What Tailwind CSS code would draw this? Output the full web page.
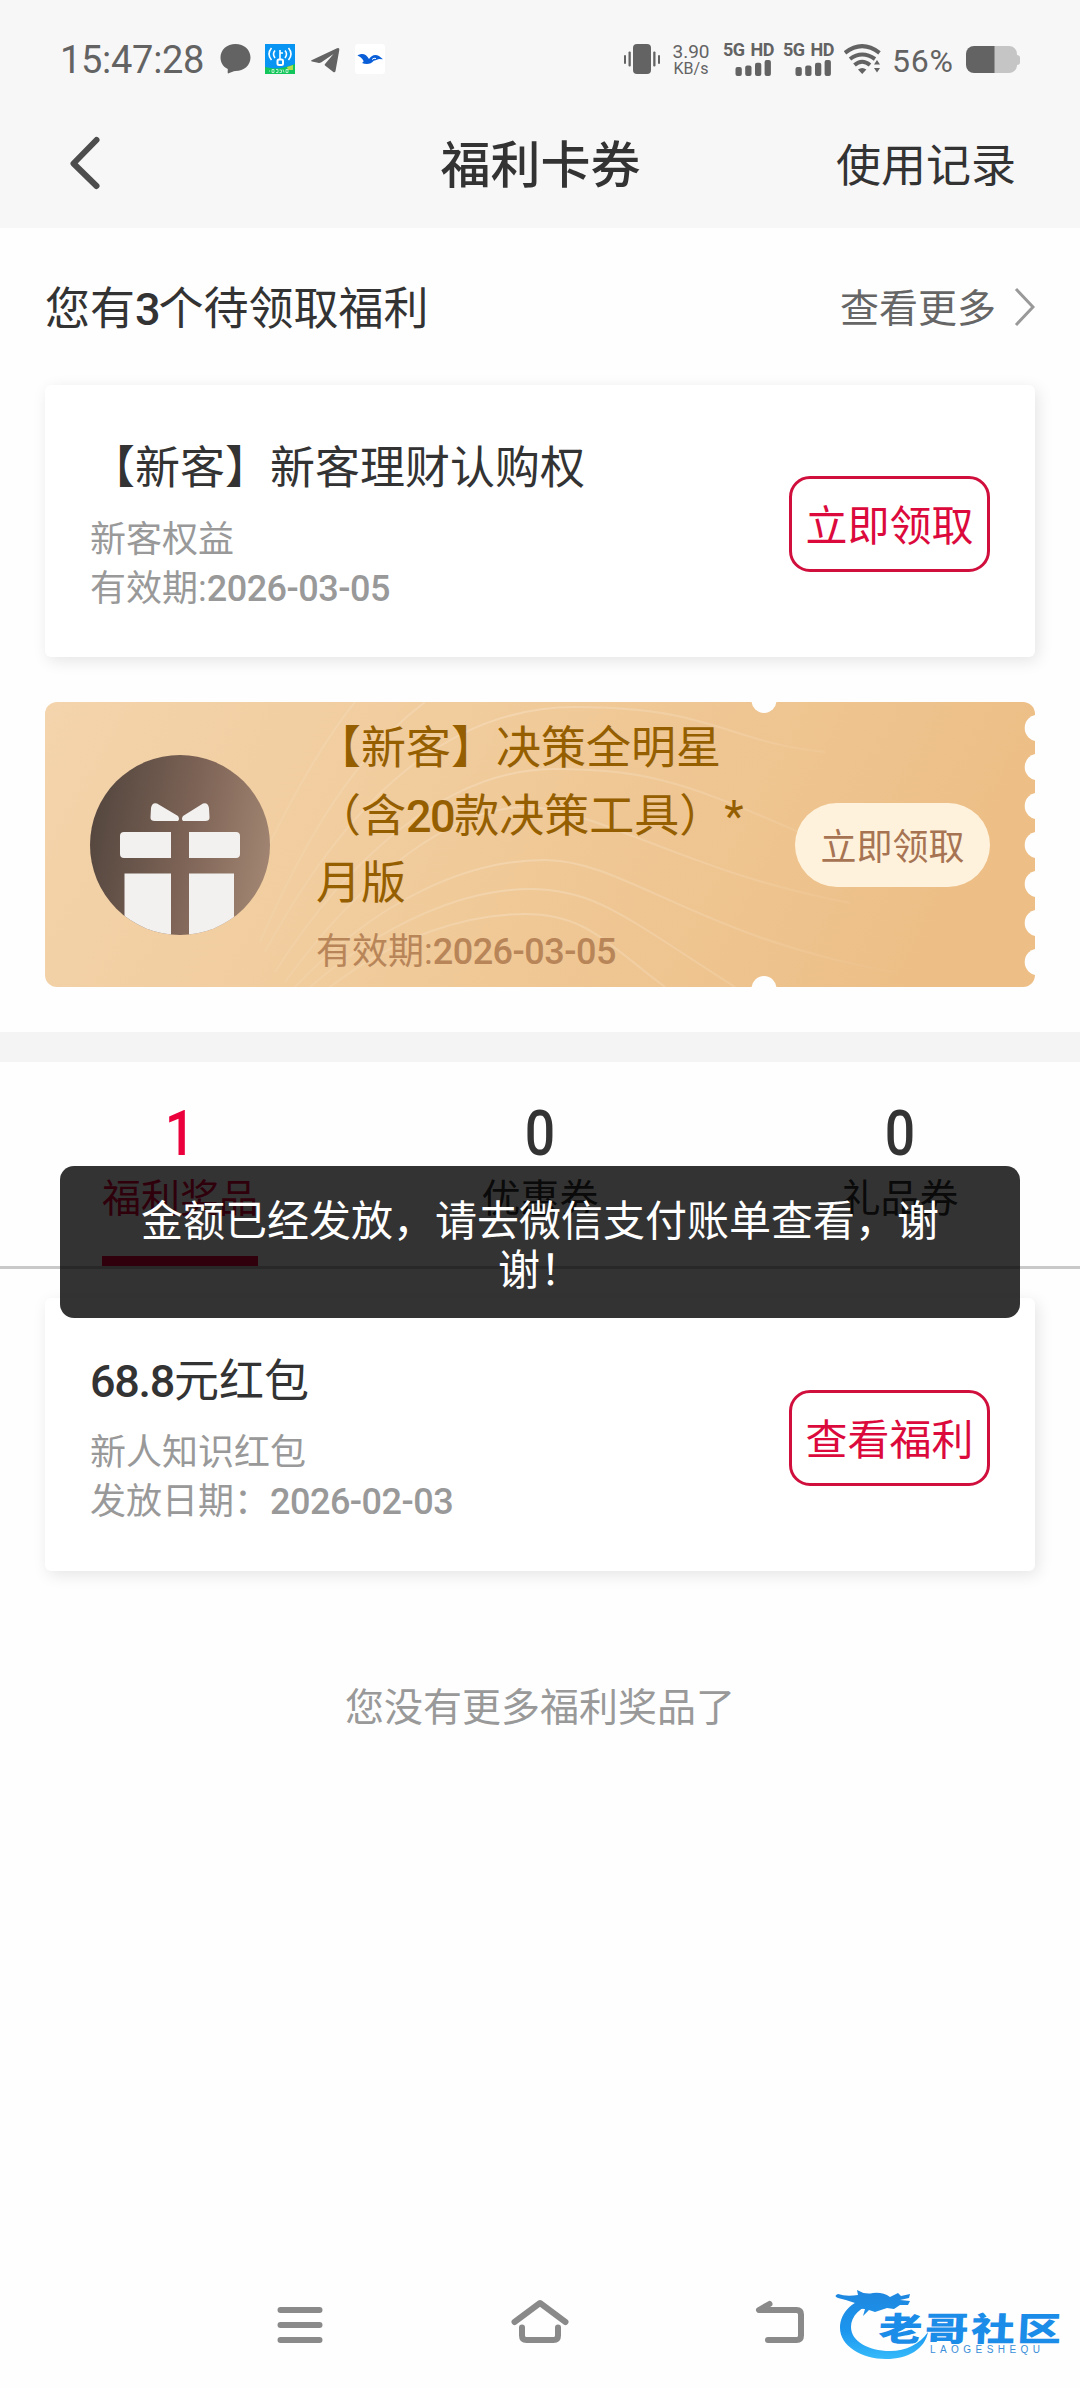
<!DOCTYPE html>
<html lang="zh-CN">
<head>
<meta charset="utf-8">
<title>福利卡券</title>
<script src="https://cdn.jsdelivr.net/npm/@tailwindcss/browser@4"></script>
</head>
<body class="bg-white">
<div class="relative flex h-[2388px] w-[1080px] flex-col overflow-hidden bg-[#fefefe] font-[Roboto,'Noto_Sans_CJK_SC',sans-serif] text-[#333]">

  <header class="h-[228px] bg-[#f7f7f7]">
    <!-- status bar -->
    <div class="flex h-[118px] items-center pl-[60px] pr-[60px] text-[#636363]">
      <span class="w-[160px] pt-[2px] text-[38px] leading-none tracking-[-0.3px]">15:47:28</span>
      <svg class="h-[30px] w-[31px]" viewBox="0 0 31 30"><path fill="#636363" d="M15.500 0C24 0 30.500 5.800 30.500 13.500S24 27 15.500 27C13.500 27 10.500 28.500 8 29.500Q7.500 29.500 7.800 25C3 22.800.5 18.500.5 13.500.5 5.800 7 0 15.500 0z"/></svg>
      <svg class="ml-[14px] h-[30px] w-[30px]" viewBox="0 0 30 30">
        <rect width="30" height="30" fill="#0794f2"/><path d="M0 23Q13 27 30 20v10H0z" fill="#13c65b"/><path d="M22 23l6-2v5h-5z" fill="#b5dc4c"/>
        <g fill="none" stroke="#fff" stroke-width="1.600"><path d="M6.500 4Q1.500 10 6.500 16M10 6.500Q7 10 10 14M23.500 4q5 6 0 12M20 6.500q3 3.500 0 7.500"/><path d="M15 6v9M15 9h3"/><rect x="12.500" y="15.500" width="5.500" height="5.500" rx="1.500" stroke-width="2"/></g>
        <path d="M4 27h1M7 25.500h2v3H7zM11 25.500h2v3h-2M14.500 26h2v2.500h-2M18 25.500l1 3M21 25.500v3h2v-3z" stroke="#d8f8e0" stroke-width=".8" fill="none"/>
      </svg>
      <svg class="ml-[15px] mt-[2px] h-[26px] w-[30px]" viewBox="0 0 30 26"><path fill="#636363" d="M1.500 13.300 27 1.200Q29.700.3 29.300 3L25.500 24Q25 26 23 24.700L15 18.500Q14.200 17.800 15 17L23.500 7 11 15.500Q9.500 16.300 8 15.800L2 14.600Q.3 14 1.500 13.300z"/></svg>
      <svg class="ml-[15px] h-[30px] w-[30px]" viewBox="0 0 30 30"><rect width="30" height="30" rx="3" fill="#fff"/><path fill="#0a5fd8" d="M2.500 11.500C7 8.500 11.500 10 14 15 16 11.500 20 9.500 24 12l4 3.200-4-.2c-2 .8-4 1.500-5 1.500-3 4-8 4-12 2.500 1.500-1 2-1.500 1-3C7 14 5 13 2.500 11.500z"/><path d="M17 15.500q2-2 4-1" stroke="#fff" fill="none" stroke-width="1"/></svg>

      <div class="ml-auto flex items-center">
        <svg class="h-[30px] w-[36px]" viewBox="0 0 36 30" fill="#636363"><rect x="9" width="18" height="30" rx="4"/><rect y="11" width="2" height="9" rx="1"/><rect x="4.500" y="7.500" width="2.300" height="15" rx="1"/><rect x="29.200" y="7.500" width="2.300" height="15" rx="1"/><rect x="34" y="11" width="2" height="9" rx="1"/></svg>
        <div class="ml-[12px] flex w-[38px] flex-col items-center gap-[1px] text-center">
          <span class="text-[19px] leading-[17px]">3.90</span><span class="text-[16px] leading-[15px]">KB/s</span>
        </div>
        <div class="ml-[13px] flex w-[50px] flex-col gap-[2px]">
          <span class="whitespace-nowrap text-[18px] leading-[16px] font-bold tracking-[-0.5px] [word-spacing:2px]">5G HD</span>
          <svg class="h-[16px] w-[50px]" viewBox="0 0 50 16" fill="#636363"><rect x="12.500" y="7" width="6.300" height="9" rx="2"/><rect x="22.200" y="5.500" width="6.300" height="10.500" rx="2"/><rect x="32" y="2.800" width="6.300" height="13.200" rx="2"/><rect x="41.600" width="6.300" height="16" rx="2"/></svg>
        </div>
        <div class="ml-[10px] flex w-[50px] flex-col gap-[2px]">
          <span class="whitespace-nowrap text-[18px] leading-[16px] font-bold tracking-[-0.5px] [word-spacing:2px]">5G HD</span>
          <svg class="h-[16px] w-[50px]" viewBox="0 0 50 16" fill="#636363"><rect x="12.500" y="7" width="6.300" height="9" rx="2"/><rect x="22.200" y="5.500" width="6.300" height="10.500" rx="2"/><rect x="32" y="2.800" width="6.300" height="13.200" rx="2"/><rect x="41.600" width="6.300" height="16" rx="2"/></svg>
        </div>
        <svg class="ml-[11px] h-[30px] w-[37px]" viewBox="0 0 37 30"><g fill="none" stroke="#636363" stroke-width="4"><path d="M1 8.800Q18 -4.500 35.500 8.800"/><path d="M6 15Q18 6 31 15"/><path d="M10.500 21Q18 14.500 26 21"/></g><path d="M14 25.500q4.200-3 8.400 0L18.200 30zM30 20.500l3-4.500 3 4.500zM30 24l3 4.500 3-4.500z" fill="#636363"/></svg>
        <span class="ml-[11px] w-[74px] pt-[3px] text-[32px] leading-none tracking-[0.8px]">56%</span>
        <svg class="mt-[2px] h-[28px] w-[54px]" viewBox="0 0 54 28"><path d="M28 0h15a8 8 0 0 1 8 8v1q3 .5 3 2.500v5q0 2-3 2.500v1a8 8 0 0 1-8 7H28z" fill="#c5c5c5"/><path d="M8 0h20.500v27H8a8 8 0 0 1-8-8V8a8 8 0 0 1 8-8z" fill="#636363"/></svg>
      </div>
    </div>
    <!-- title bar -->
    <div class="grid h-[92px] grid-cols-3 items-center pl-[65px] pr-[64px]">
      <svg class="ml-[3px] h-[56px] w-[34px]" viewBox="0 0 34 56"><path d="M28.500 4 5.500 27.500 28.500 50" fill="none" stroke="#4d4d4d" stroke-width="6" stroke-linecap="round" stroke-linejoin="round"/></svg>
      <h1 class="pt-[4px] text-center text-[50px] leading-none font-medium">福利卡券</h1>
      <a class="pt-[5px] text-right text-[45px] leading-none">使用记录</a>
    </div>
  </header>

  <section class="px-[45px]">
    <div class="flex h-[157px] items-center justify-between pt-[6px]">
      <h2 class="text-[45px] leading-none">您有<span class="font-medium tracking-[-2px]">3</span>个待领取福利</h2>
      <a class="flex items-center gap-[18px] text-[39px] leading-none text-[#666]">查看更多
        <svg class="-mt-[5px] h-[40px] w-[21px]" viewBox="0 0 21 40"><path d="M2 2 19 20 2 38" fill="none" stroke="#999" stroke-width="3"/></svg>
      </a>
    </div>

    <div class="flex h-[272px] items-center justify-between rounded-[6px] bg-white px-[45px] shadow-[3px_4px_16px_rgba(0,0,0,0.1)]">
      <div class="pt-[7px]">
        <h3 class="text-[45px] leading-[66px]">【新客】新客理财认购权</h3>
        <p class="mt-[14px] text-[36px] leading-[49px] text-[#999]">新客权益<br>有效期:<span class="font-medium tracking-[-0.5px]">2026-03-05</span></p>
      </div>
      <button class="mt-[6px] h-[96px] w-[201px] rounded-[21px] border-3 border-[#d00f3d] pt-[6px] text-[42px] leading-none text-[#dc0a3c]">立即领取</button>
    </div>

    <!-- gold ticket -->
    <div class="relative mt-[45px] h-[285px]">
      <svg class="absolute inset-0 h-[285px] w-[990px]" viewBox="0 0 990 285">
        <defs>
          <linearGradient id="gold" x1="0" y1="0" x2="1" y2=".15"><stop offset="0" stop-color="#f4d4ac"/><stop offset=".5" stop-color="#f0ca99"/><stop offset="1" stop-color="#edbf87"/></linearGradient>
          <linearGradient id="wave" x1="200" y1="0" x2="860" y2="0" gradientUnits="userSpaceOnUse"><stop offset="0" stop-color="#fff" stop-opacity=".05"/><stop offset=".4" stop-color="#fff" stop-opacity=".2"/><stop offset=".75" stop-color="#fff" stop-opacity=".12"/><stop offset="1" stop-color="#fff" stop-opacity="0"/></linearGradient>
          <clipPath id="ticket"><rect width="990" height="285" rx="12"/></clipPath>
        </defs>
        <g clip-path="url(#ticket)">
          <rect width="990" height="285" fill="url(#gold)"/>
          <g fill="none" stroke="url(#wave)" stroke-width="2">
            <path d="M220 250C290 120 390 5 530 5S680 40 780 50"/>
            <path d="M230 270C300 160 400 67 510 67S660 90 800 150"/>
            <path d="M240 280C320 170 410 105 480 105S640 170 805 201"/>
            <path d="M250 285C330 200 420 158 500 158S660 240 860 272"/>
            <path d="M265 285C340 220 420 187 485 187S580 215 690 285"/>
            <path d="M285 285C350 235 420 212 480 212S560 240 620 285"/>
            <path d="M215 240C250 160 300 60 380 0M205 180C240 110 270 50 310 0"/>
          </g>
          <g fill="#fefefe">
            <circle cx="719" cy="-1.500" r="12.500"/><circle cx="719" cy="286.500" r="12.500"/>
            <circle cx="993" cy="26" r="13.300"/><circle cx="993" cy="65" r="13.300"/><circle cx="993" cy="104" r="13.300"/><circle cx="993" cy="143" r="13.300"/><circle cx="993" cy="182" r="13.300"/><circle cx="993" cy="221" r="13.300"/><circle cx="993" cy="260" r="13.300"/>
          </g>
        </g>
      </svg>
      <div class="relative flex h-[285px] items-center pl-[45px] pr-[45px]">
        <svg class="mt-px h-[180px] w-[180px] shrink-0" viewBox="0 0 180 180">
          <defs>
            <linearGradient id="disc" x1="0" y1=".3" x2="1" y2=".5"><stop offset="0" stop-color="#53463e"/><stop offset=".55" stop-color="#7d6356"/><stop offset="1" stop-color="#a08471"/></linearGradient>
            <clipPath id="round"><circle cx="90" cy="90" r="90"/></clipPath>
          </defs>
          <g clip-path="url(#round)"><rect width="180" height="180" fill="url(#disc)"/>
          <g fill="#f2f1f0"><path d="M61 53Q62 47 67 48.500L88 61Q90 64 88 66H65Q60 66 60.500 62z"/><path d="M119 53Q118 47 113 48.500L93 61Q91 64 93 66H115Q120 66 119.500 62z"/>
          <path d="M34 77H81v26H34q-4 0-4-4V81q0-4 4-4zM99 77h47q4 0 4 4v18q0 4-4 4H99zM34.500 118.500H81V180H34.500zM99 118.500h45V180H99z"/></g></g>
        </svg>
        <div class="ml-[46px] w-[460px] pt-[12px]">
          <h3 class="text-[45px] leading-[67.500px] text-[#955f00]">【新客】决策全明星<br>（含<span class="font-medium tracking-[-1.5px]">20</span>款决策工具）*<br>月版</h3>
          <p class="text-[36px] leading-[68px] text-[#b88559]">有效期:<span class="font-medium tracking-[-0.5px]">2026-03-05</span></p>
        </div>
        <button class="ml-auto h-[84px] w-[195px] rounded-full bg-[#fff2dc] pt-[6px] text-[36px] leading-none text-[#a77453]">立即领取</button>
      </div>
    </div>
  </section>

  <div class="mt-[45px] h-[30px] shrink-0 bg-[#f4f4f4]"></div>

  <nav class="grid h-[207px] shrink-0 grid-cols-3 border-b-3 border-[#c9c9c9] text-center">
    <a class="flex flex-col items-center pt-[40px] text-[#eb003c]"><span class="scale-x-[0.850] text-[63px] leading-[64px] font-medium">1</span><span class="mt-[10px] text-[39px] leading-[46px]">福利奖品</span><i class="mt-auto h-[10px] w-[156px] bg-[#f0003c]"></i></a>
    <a class="flex flex-col items-center pt-[40px]"><span class="scale-x-[0.850] text-[63px] leading-[64px] font-medium">0</span><span class="mt-[10px] text-[39px] leading-[46px]">优惠券</span></a>
    <a class="flex flex-col items-center pt-[40px]"><span class="scale-x-[0.850] text-[63px] leading-[64px] font-medium">0</span><span class="mt-[10px] text-[39px] leading-[46px]">礼品券</span></a>
  </nav>

  <section class="px-[45px] pt-[29px]">
    <div class="flex h-[273px] items-center justify-between rounded-[6px] bg-white px-[45px] shadow-[3px_4px_16px_rgba(0,0,0,0.1)]">
      <div class="pt-[7px]">
        <h3 class="text-[45px] leading-[66px]"><span class="font-medium tracking-[-1.3px]">68.8</span>元红包</h3>
        <p class="mt-[14px] text-[36px] leading-[49px] text-[#999]">新人知识红包<br>发放日期：<span class="font-medium tracking-[-0.5px]">2026-02-03</span></p>
      </div>
      <button class="mt-[6px] h-[96px] w-[201px] rounded-[21px] border-3 border-[#d00f3d] pt-[6px] text-[42px] leading-none text-[#dc0a3c]">查看福利</button>
    </div>
    <p class="mt-[114px] text-center text-[39px] leading-[46px] text-[#999]">您没有更多福利奖品了</p>
  </section>

  <!-- system navigation -->
  <footer class="mt-auto flex h-[126px] items-center justify-center gap-[180px]">
    <svg class="h-[60px] w-[60px]" viewBox="0 0 60 60" fill="none" stroke="#8a8a8a" stroke-width="6" stroke-linecap="round"><path d="M10.500 15h39M10.500 30h39M10.500 45h39"/></svg>
    <svg class="h-[60px] w-[60px]" viewBox="0 0 60 60" fill="none" stroke="#8a8a8a" stroke-width="6" stroke-linecap="round" stroke-linejoin="round"><path d="M4.500 27 30 8 55.500 27M12 32.500v8q0 4.500 4.500 4.500h27q4.500 0 4.500-4.500v-8"/></svg>
    <svg class="h-[60px] w-[60px]" viewBox="0 0 60 60" fill="none" stroke="#8a8a8a" stroke-width="6" stroke-linecap="round" stroke-linejoin="round"><path d="M19.500 9 9 15h37.500q4.500 0 4.500 4.500v21q0 4.500-4.500 4.500H18"/></svg>
  </footer>

  <!-- toast -->
  <div class="absolute left-[60px] top-[1166px] flex h-[152px] w-[960px] items-center justify-center rounded-[14px] bg-black/80 px-[75px] pt-[7px] text-center text-[42px] leading-[49px] text-white">金额已经发放，请去微信支付账单查看，谢谢！</div>

  <!-- community watermark -->
  <svg class="absolute left-[820px] top-[2260px] h-[128px] w-[260px]" viewBox="0 0 260 128">
    <defs><linearGradient id="sea" x1="0" y1="30" x2="0" y2="98" gradientUnits="userSpaceOnUse"><stop offset="0" stop-color="#1f86de"/><stop offset=".6" stop-color="#1b95ee"/><stop offset="1" stop-color="#35b9fa"/></linearGradient></defs>
    <g fill="url(#sea)">
      <path d="M54 38C34 38 20 52 20 68c0 18 22 31 46 31 22 0 39-10 42-27-8 12-22 19-38 19-22 0-39-10-39-24 0-11 9-20 25-25z"/>
      <path d="M18 34q8 3 20 1l-1-5q8 5 16 3 10-1 17 4l8-4 3 3 9-2-1 4-9 2 10 1-2 4 -8 0-6 4-7-1-12 4-6-2-6 6 2-7q-8 0-10-6-8-3-17-5-5-2 0-4z"/>
    </g>
    <text transform="translate(58 80.500) skewX(-3) scale(1.330 1)" font-family="'Noto Sans CJK SC',sans-serif" font-weight="900" font-size="33" letter-spacing="1.800" fill="#1b8ce8">老哥社区</text>
    <text x="110" y="92.500" textLength="110" font-family="Liberation Sans,sans-serif" font-size="10" fill="#3a8fd8">LAOGESHEQU</text>
  </svg>
</div>
</body>
</html>
